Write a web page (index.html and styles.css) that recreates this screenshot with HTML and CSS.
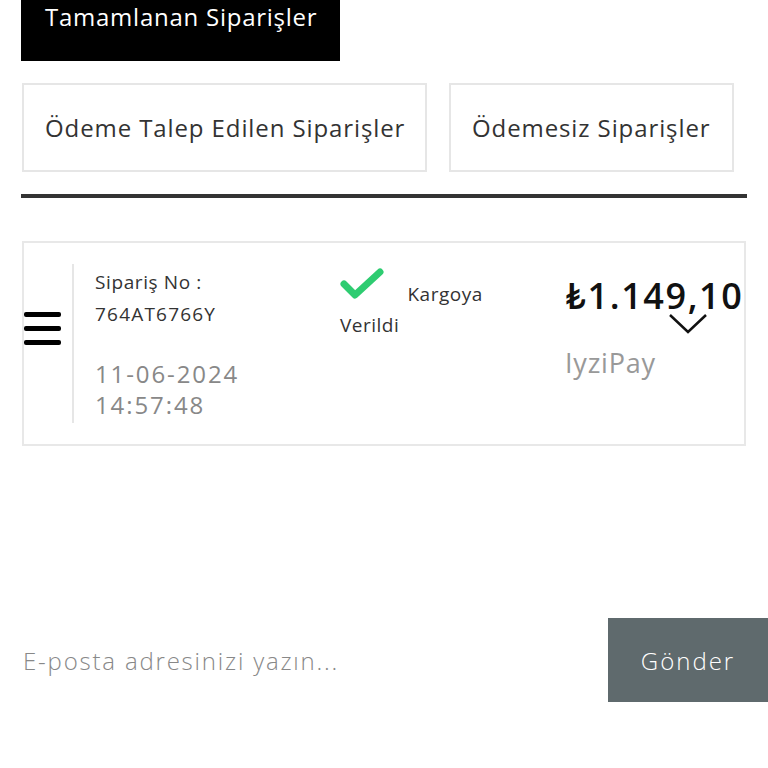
FILE: index.html
```html
<!DOCTYPE html>
<html lang="tr">
<head>
  <meta charset="UTF-8" />
  <meta name="viewport" content="width=device-width, initial-scale=1.0"/>
  <title>Siparişlerim</title>
  <link rel="stylesheet" href="styles.css">
</head>
<body>
  <!-- Order tabs -->
  <div class="tabs">
    <a class="tab tab-active">Tamamlanan Siparişler</a>
    <div class="tab-row">
      <a class="tab">Ödeme Talep Edilen Siparişler</a>
      <a class="tab">Ödemesiz Siparişler</a>
    </div>
  </div>
  <hr class="divider">

  <!-- Order card -->
  <div class="order">
    <div class="order-menu">
      <span></span><span></span><span></span>
    </div>
    <div class="order-info">
      <p class="order-no">Sipariş No :<br><span class="code">764AT6766Y</span></p>
      <p class="order-date">11-06-2024<br>14:57:48</p>
    </div>
    <div class="order-status">
      <svg class="check" width="44" height="32" viewBox="0 0 44 32">
        <path d="M4 16 L15 27 L40 4" fill="none" stroke="#2ecc71" stroke-width="7" stroke-linecap="round" stroke-linejoin="round"/>
      </svg>
      <span class="status-text">Kargoya</span>
      <div class="status-next">Verildi</div>
    </div>
    <div class="order-price">
      <div class="price">₺1.149,10</div>
      <svg class="chevron" width="40" height="22" viewBox="0 0 40 22">
        <path d="M2 2 L20 19 L38 2" fill="none" stroke="#111" stroke-width="2.5"/>
      </svg>
      <div class="pay">IyziPay</div>
    </div>
  </div>

  <!-- Newsletter -->
  <form class="newsletter" onsubmit="return false">
    <input type="email" placeholder="E-posta adresinizi yazın...">
    <button type="submit">Gönder</button>
  </form>
</body>
</html>
```

FILE: styles.css
```css
body {
  margin: 0;
  font-family: "Open Sans", Lato, sans-serif;
  color: #333;
  background: #fff;
}
.tabs {
  padding: 0 22px;
}
.tab {
  display: inline-block;
  box-sizing: border-box;
  font-size: 24px;
  letter-spacing: 0.9px;
  color: #333;
  text-decoration: none;
  border: 2px solid #e6e6e6;
  height: 89px;
  line-height: 85px;
  padding: 0 21px;
  white-space: nowrap;
  cursor: pointer;
}
.tab-active {
  background: #000;
  color: #fff;
  border: none;
  height: 61px;
  line-height: 34px;
  width: 319px;
  padding: 0 24px;
  margin-left: -1px;
  letter-spacing: 0.75px;
}
.tab-row {
  display: flex;
  gap: 22px;
  margin-top: 22px;
}
.tab-row .tab:first-child {
  width: 405px;
}
.tab-row .tab:last-child {
  width: 285px;
}
.divider {
  margin: 22px 21px 0 21px;
  border: none;
  height: 4px;
  background: #333;
}
.order {
  display: flex;
  margin: 43px 22px 0 22px;
  height: 205px;
  box-sizing: border-box;
  border: 2px solid #e8e8e8;
}
.order-menu {
  width: 48px;
  display: flex;
  flex-direction: column;
  gap: 9px;
  padding-top: 48px;
  border-right: 2px solid #e6e6e6;
  margin: 21px 0 21px 0;
}
.order-menu span {
  display: block;
  width: 37px;
  height: 5px;
  border-radius: 2px;
  background: #000;
}
.order-info {
  width: 245px;
  padding: 23px 0 0 21px;
}
.order-no {
  margin: 0;
  font-size: 19px;
  letter-spacing: 0.6px;
  line-height: 32px;
  color: #333;
}
.code {
  letter-spacing: 1.2px;
}
.order-date {
  margin: 28px 0 0 0;
  font-size: 24px;
  letter-spacing: 1.9px;
  line-height: 31px;
  color: #888;
}
.order-status {
  width: 225px;
  padding-top: 25px;
  font-size: 19px;
  letter-spacing: 0.5px;
  line-height: 32px;
  color: #333;
}
.check {
  vertical-align: top;
}
.status-text {
  margin-left: 18px;
  position: relative;
  top: 10px;
}
.status-next {
  margin-top: 9px;
}
.order-price {
  flex: 1;
  padding-top: 31px;
  position: relative;
}
.price {
  font-size: 36px;
  font-weight: 600;
  letter-spacing: 1.6px;
  color: #111;
  line-height: 44px;
  white-space: nowrap;
}
.chevron {
  position: absolute;
  left: 103px;
  top: 70px;
}
.pay {
  margin-top: 26px;
  font-size: 27px;
  letter-spacing: 0.8px;
  color: #999;
}
.newsletter {
  display: flex;
  margin-top: 172px;
  height: 84px;
}
.newsletter input {
  flex: 1;
  border: none;
  outline: none;
  font-family: "Open Sans", Lato, sans-serif;
  font-size: 24px;
  font-weight: 300;
  letter-spacing: 1.8px;
  padding: 0 23px;
  color: #333;
}
.newsletter input::placeholder {
  color: #888;
}
.newsletter button {
  width: 160px;
  border: none;
  background: #5f6a6d;
  color: #fff;
  font-family: "Open Sans", Lato, sans-serif;
  font-size: 24px;
  font-weight: 300;
  letter-spacing: 2px;
  cursor: pointer;
}
```
